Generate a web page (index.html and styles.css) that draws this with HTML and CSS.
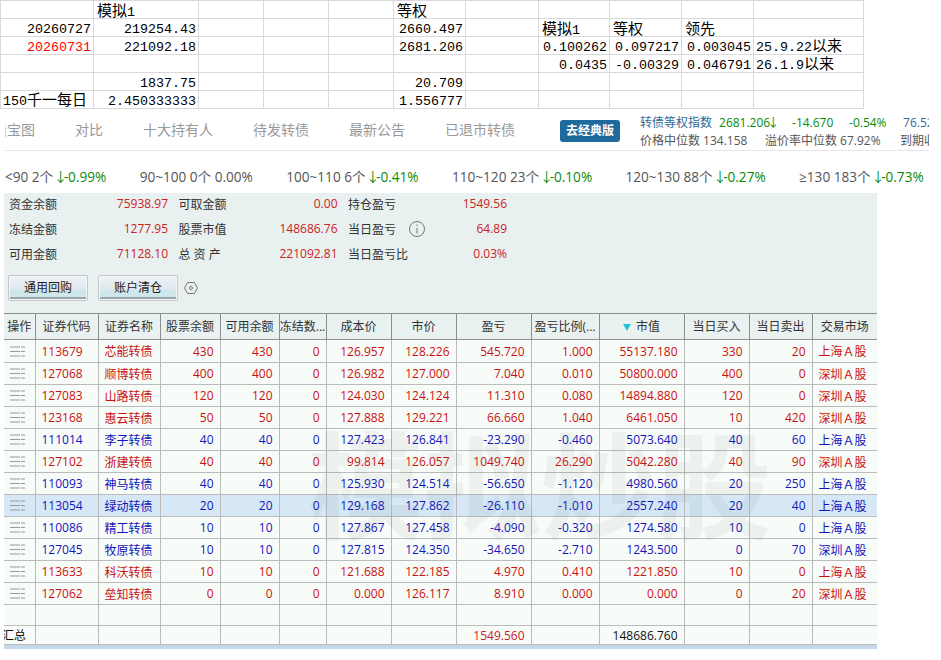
FILE: index.html
```html
<!DOCTYPE html>
<html lang="zh-CN">
<head>
    <meta charset="UTF-8">
    <meta name="viewport" content="width=device-width, initial-scale=1.0">
    <title>模拟炒股</title>
    <link rel="stylesheet" href="styles.css">
</head>
<body>
    <svg class="defs" width="0" height="0">
        <symbol id="row-menu" viewBox="0 0 15 11">
            <path d="M0 1h10M11 1h4M0 5.500h10M11 5.500h4M0 10h10M11 10h4" stroke="#999" fill="none"/>
        </symbol>
    </svg>

    <table class="sheet">
        <colgroup>
            <col class="c93"><col class="c105"><col class="c65"><col class="c65"><col class="c65"><col class="c72"><col class="c73"><col class="c71"><col class="c72"><col class="c72"><col class="c110">
        </colgroup>
        <tr><td></td><td class="cn">模拟<span class="mono">1</span></td><td></td><td></td><td></td><td class="cn">等权</td><td></td><td></td><td></td><td></td><td></td></tr>
        <tr><td>20260727</td><td>219254.43</td><td></td><td></td><td></td><td>2660.497</td><td></td><td class="cn">模拟<span class="mono">1</span></td><td class="cn">等权</td><td class="cn">领先</td><td></td></tr>
        <tr><td class="red">20260731</td><td>221092.18</td><td></td><td></td><td></td><td>2681.206</td><td></td><td>0.100262</td><td>0.097217</td><td>0.003045</td><td class="note">25.9.22<span class="cn-in">以来</span></td></tr>
        <tr><td></td><td></td><td></td><td></td><td></td><td></td><td></td><td>0.0435</td><td>-0.00329</td><td>0.046791</td><td class="note">26.1.9<span class="cn-in">以来</span></td></tr>
        <tr><td></td><td>1837.75</td><td></td><td></td><td></td><td>20.709</td><td></td><td></td><td></td><td></td><td></td></tr>
        <tr><td class="note">150<span class="cn-in">千一每日</span></td><td>2.450333333</td><td></td><td></td><td></td><td>1.556777</td><td></td><td></td><td></td><td></td><td></td></tr>
    </table>

    <div class="topbar">
        <div class="tabs">
            <a class="tab tab-cut">债宝图</a>
            <a class="tab">对比</a>
            <a class="tab">十大持有人</a>
            <a class="tab">待发转债</a>
            <a class="tab">最新公告</a>
            <a class="tab">已退市转债</a>
        </div>
        <a class="classic-btn">去经典版</a>
        <div class="index-info">
            <div class="info-line">
                <span class="idx-name">转债等权指数</span>
                <span class="green w73">2681.206<i class="arr">↓</i></span>
                <span class="green w57">-14.670</span>
                <span class="green w54">-0.54%</span>
                <span class="idx-name">76.52</span>
            </div>
            <div class="info-line">
                <span class="w125">价格中位数 134.158</span>
                <span class="w135">溢价率中位数 67.92%</span>
                <span>到期收益率</span>
            </div>
        </div>
    </div>

    <div class="ranges">
        <span>&lt;90 2个 <b><i class="arr">↓</i>-0.99%</b></span>
        <span>90~100 0个 0.00%</span>
        <span>100~110 6个 <b><i class="arr">↓</i>-0.41%</b></span>
        <span>110~120 23个 <b><i class="arr">↓</i>-0.10%</b></span>
        <span>120~130 88个 <b><i class="arr">↓</i>-0.27%</b></span>
        <span>≥130 183个 <b><i class="arr">↓</i>-0.73%</b></span>
    </div>

    <div class="account">
        <div class="funds">
            <div class="fund"><label>资金余额</label><em>75938.97</em></div>
            <div class="fund"><label>可取金额</label><em>0.00</em></div>
            <div class="fund"><label>持仓盈亏</label><em>1549.56</em></div>
            <div class="fund"><label>冻结金额</label><em>1277.95</em></div>
            <div class="fund"><label>股票市值</label><em>148686.76</em></div>
            <div class="fund">
                <label>当日盈亏</label>
                <svg class="info-icon" width="18" height="18" viewBox="0 0 18 18">
                    <circle cx="9" cy="9" r="7.500" fill="none" stroke="#777"/>
                    <path d="M9 8v5.500M9 4.500v1.500" stroke="#777" fill="none"/>
                </svg>
                <em>64.89</em>
            </div>
            <div class="fund"><label>可用金额</label><em>71128.10</em></div>
            <div class="fund"><label>总 资 产</label><em>221092.81</em></div>
            <div class="fund"><label>当日盈亏比</label><em>0.03%</em></div>
        </div>
        <div class="actions">
            <button class="gray-btn">通用回购</button>
            <button class="gray-btn">账户清仓</button>
            <svg width="14" height="14" viewBox="0 0 14 14">
                <path d="M3.500 1.500h7L13.500 7l-3 5.500h-7L.5 7z" fill="none" stroke="#777"/>
                <circle cx="7" cy="7" r="1.500" fill="none" stroke="#777"/>
            </svg>
        </div>
    </div>

    <div class="holdings">
        <table class="grid">
            <colgroup>
                <col class="h31"><col class="h63"><col class="h62"><col class="h60"><col class="h59"><col class="h47"><col class="h65"><col class="h65"><col class="h75"><col class="h68"><col class="h85"><col class="h65"><col class="h63"><col class="h65">
            </colgroup>
            <thead>
                <tr>
                    <th>操作</th><th>证券代码</th><th>证券名称</th><th>股票余额</th><th>可用余额</th><th>冻结数...</th><th>成本价</th><th>市价</th><th>盈亏</th><th>盈亏比例(...</th><th><i class="sort-mark"></i>市值</th><th>当日买入</th><th>当日卖出</th><th>交易市场</th>
                </tr>
            </thead>
            <tbody>
                <tr class="up first"><td class="op"><svg class="menu"><use href="#row-menu"/></svg></td><td class="txt">113679</td><td class="txt">芯能转债</td><td>430</td><td>430</td><td>0</td><td>126.957</td><td>128.226</td><td>545.720</td><td>1.000</td><td>55137.180</td><td>330</td><td>20</td><td class="txt">上海Ａ股</td></tr>
                <tr class="up"><td class="op"><svg class="menu"><use href="#row-menu"/></svg></td><td class="txt">127068</td><td class="txt">顺博转债</td><td>400</td><td>400</td><td>0</td><td>126.982</td><td>127.000</td><td>7.040</td><td>0.010</td><td>50800.000</td><td>400</td><td>0</td><td class="txt">深圳Ａ股</td></tr>
                <tr class="up"><td class="op"><svg class="menu"><use href="#row-menu"/></svg></td><td class="txt">127083</td><td class="txt">山路转债</td><td>120</td><td>120</td><td>0</td><td>124.030</td><td>124.124</td><td>11.310</td><td>0.080</td><td>14894.880</td><td>120</td><td>0</td><td class="txt">深圳Ａ股</td></tr>
                <tr class="up"><td class="op"><svg class="menu"><use href="#row-menu"/></svg></td><td class="txt">123168</td><td class="txt">惠云转债</td><td>50</td><td>50</td><td>0</td><td>127.888</td><td>129.221</td><td>66.660</td><td>1.040</td><td>6461.050</td><td>10</td><td>420</td><td class="txt">深圳Ａ股</td></tr>
                <tr class="down"><td class="op"><svg class="menu"><use href="#row-menu"/></svg></td><td class="txt">111014</td><td class="txt">李子转债</td><td>40</td><td>40</td><td>0</td><td>127.423</td><td>126.841</td><td>-23.290</td><td>-0.460</td><td>5073.640</td><td>40</td><td>60</td><td class="txt">上海Ａ股</td></tr>
                <tr class="up"><td class="op"><svg class="menu"><use href="#row-menu"/></svg></td><td class="txt">127102</td><td class="txt">浙建转债</td><td>40</td><td>40</td><td>0</td><td>99.814</td><td>126.057</td><td>1049.740</td><td>26.290</td><td>5042.280</td><td>40</td><td>90</td><td class="txt">深圳Ａ股</td></tr>
                <tr class="down"><td class="op"><svg class="menu"><use href="#row-menu"/></svg></td><td class="txt">110093</td><td class="txt">神马转债</td><td>40</td><td>40</td><td>0</td><td>125.930</td><td>124.514</td><td>-56.650</td><td>-1.120</td><td>4980.560</td><td>20</td><td>250</td><td class="txt">上海Ａ股</td></tr>
                <tr class="down sel"><td class="op"><svg class="menu"><use href="#row-menu"/></svg></td><td class="txt">113054</td><td class="txt">绿动转债</td><td>20</td><td>20</td><td>0</td><td>129.168</td><td>127.862</td><td>-26.110</td><td>-1.010</td><td>2557.240</td><td>20</td><td>40</td><td class="txt">上海Ａ股</td></tr>
                <tr class="down"><td class="op"><svg class="menu"><use href="#row-menu"/></svg></td><td class="txt">110086</td><td class="txt">精工转债</td><td>10</td><td>10</td><td>0</td><td>127.867</td><td>127.458</td><td>-4.090</td><td>-0.320</td><td>1274.580</td><td>10</td><td>0</td><td class="txt">上海Ａ股</td></tr>
                <tr class="down"><td class="op"><svg class="menu"><use href="#row-menu"/></svg></td><td class="txt">127045</td><td class="txt">牧原转债</td><td>10</td><td>10</td><td>0</td><td>127.815</td><td>124.350</td><td>-34.650</td><td>-2.710</td><td>1243.500</td><td>0</td><td>70</td><td class="txt">深圳Ａ股</td></tr>
                <tr class="up"><td class="op"><svg class="menu"><use href="#row-menu"/></svg></td><td class="txt">113633</td><td class="txt">科沃转债</td><td>10</td><td>10</td><td>0</td><td>121.688</td><td>122.185</td><td>4.970</td><td>0.410</td><td>1221.850</td><td>10</td><td>0</td><td class="txt">上海Ａ股</td></tr>
                <tr class="up"><td class="op"><svg class="menu"><use href="#row-menu"/></svg></td><td class="txt">127062</td><td class="txt">垒知转债</td><td>0</td><td>0</td><td>0</td><td>0.000</td><td>126.117</td><td>8.910</td><td>0.000</td><td>0.000</td><td>0</td><td>20</td><td class="txt">深圳Ａ股</td></tr>
                <tr class="blank"><td></td><td></td><td></td><td></td><td></td><td></td><td></td><td></td><td></td><td></td><td></td><td></td><td></td><td></td></tr>
                <tr class="total"><td class="sum-label">汇总</td><td></td><td></td><td></td><td></td><td></td><td></td><td></td><td class="red">1549.560</td><td></td><td>148686.760</td><td></td><td></td><td></td></tr>
            </tbody>
        </table>
        <div class="watermark">模拟炒股</div>
        <div class="grid-foot"></div>
    </div>
</body>
</html>
```

FILE: styles.css
```css
body {
    margin: 0;
    background: #fff;
    font-family: "Open Sans", "Noto Sans CJK SC", sans-serif;
    font-size: 12px;
    color: #333;
    overflow: hidden;
}

.defs {
    display: block;
    height: 0;
}

/* excel part on top */
.sheet {
    border-collapse: collapse;
    table-layout: fixed;
    width: 863px;
    font-family: "Liberation Mono", "Noto Sans CJK SC", monospace;
    font-size: 13.33px;
    color: #000;
}

.sheet td {
    height: 17px;
    padding: 0 2px 0 0;
    border: 1px solid #d9d9d9;
    text-align: right;
    vertical-align: bottom;
    white-space: nowrap;
    line-height: 13px;
}

.sheet td.cn {
    height: 15px;
    text-align: left;
    padding: 0 0 2px 3px;
    font-family: "Noto Sans CJK SC", sans-serif;
    font-size: 15px;
}

.sheet .mono {
    font-family: "Liberation Mono", monospace;
    font-size: 13.33px;
    line-height: 0;
}

.sheet .note {
    text-align: left;
    padding-left: 2px;
}

.cn-in {
    font-family: "Noto Sans CJK SC", sans-serif;
    font-size: 15px;
}

.sheet .red { color: #f00; }

.c93 { width: 93px; }
.c105 { width: 105px; }
.c65 { width: 65px; }
.c72 { width: 72px; }
.c73 { width: 73px; }
.c71 { width: 71px; }
.c110 { width: 110px; }

/* tabs and index info */
.topbar {
    display: flex;
    align-items: center;
    width: 924px;
    height: 41px;
    margin-left: 5px;
    border-bottom: 1px solid #e6e6e6;
    overflow: hidden;
}

.tabs {
    display: flex;
    gap: 40px;
    font-size: 14px;
    color: #999;
    flex: none;
    width: 555px;
    margin-top: -2px;
    overflow: hidden;
}

.tab {
    flex: none;
}

.tab-cut {
    margin-left: -12px;
}

.classic-btn {
    flex: none;
    width: 60px;
    height: 22px;
    margin-top: 3px;
    line-height: 22px;
    text-align: center;
    background: #1f6a9c;
    color: #fff;
    font-weight: bold;
    border-radius: 3px;
}

.index-info {
    flex: none;
    margin-left: 20px;
    width: 300px;
    margin-top: 5px;
    white-space: nowrap;
}

.info-line {
    display: flex;
    height: 18px;
    line-height: 18px;
    color: #555;
}

.info-line span {
    flex: none;
}

.idx-name {
    color: #2c6a9c;
    margin-right: 7px;
}

.green { color: #0a8a0a; }
.w73 { width: 73px; }
.w57 { width: 57px; }
.w54 { width: 54px; }
.w125 { width: 125px; }
.w135 { width: 135px; }

.arr {
    display: inline-block;
    width: 7px;
    font-style: normal;
    text-indent: -3px;
    overflow: hidden;
    vertical-align: bottom;
}

/* price ranges */
.ranges {
    display: flex;
    gap: 33.4px;
    height: 42px;
    padding: 7px 0 0 5px;
    box-sizing: border-box;
    align-items: center;
    font-size: 13.6px;
    color: #555;
    white-space: nowrap;
}

.ranges b {
    font-weight: normal;
    color: #0a8a0a;
}

/* account box */
.account {
    width: 873px;
    height: 120px;
    margin-left: 4px;
    background: #e8f0f0;
    overflow: hidden;
}

.funds {
    display: grid;
    grid-template-columns: 159px 159px 159px;
    column-gap: 10.5px;
    grid-auto-rows: 25px;
    margin-top: -2px;
    padding-left: 5px;
    align-items: center;
}

.fund {
    display: flex;
    align-items: center;
}

.fund em {
    margin-left: auto;
    font-style: normal;
    color: #c22;
}

.info-icon {
    margin-left: 12px;
}

.actions {
    display: flex;
    align-items: center;
    gap: 10px;
    padding: 9px 0 0 4px;
}

.actions svg {
    margin: 0 0 0 -4px;
}

.gray-btn {
    width: 80px;
    height: 26px;
    padding: 0 0 3px;
    border: 1px solid #c4c8ca;
    border-radius: 2px;
    box-shadow: inset 0 0 0 1px #f4f6f7;
    background: linear-gradient(to bottom, #eef2f6 0, #dfe8ee 55%, #cfe6ea 60%, #cfe6ea 88%, #9aa7ab 89%, #9aa7ab 100%);
    font-family: "Noto Sans CJK SC", sans-serif;
    font-size: 12px;
    color: #222;
}

/* holdings table */
.holdings {
    position: relative;
    width: 873px;
    margin-left: 4px;
    overflow: hidden;
}

.grid {
    border-collapse: collapse;
    table-layout: fixed;
    width: 873px;
}

.h31 { width: 31px; }
.h63 { width: 63px; }
.h62 { width: 62px; }
.h60 { width: 60px; }
.h59 { width: 59px; }
.h47 { width: 47px; }
.h65 { width: 65px; }
.h75 { width: 75px; }
.h68 { width: 68px; }
.h85 { width: 85px; }

.grid th,
.grid td {
    padding: 0 6px;
    overflow: hidden;
    white-space: nowrap;
    box-sizing: border-box;
}

.grid th {
    height: 26px;
    padding: 0 0 2px;
    background: #e9f1f1;
    font-weight: normal;
    border: 1px solid #8a8f90;
    border-left-width: 0;
}

.grid th:last-child { border-right-width: 0; }

.grid td {
    height: 22px;
    text-align: right;
    background: #f8fcf9;
    border-right: 1px solid #bbb;
    border-bottom: 1px solid #bbb;
}

.grid td:last-child { border-right-width: 0; }

.grid .first td { height: 23px; }
.grid .blank td { height: 21px; }
.grid .total td { height: 18px; color: #111; }
.grid .total .red { color: #c22; }

.grid .txt { text-align: left; }
.grid .op { padding: 0 0 0 6px; text-align: left; }

.up td { color: #cc1010; }
.down td { color: #1414bb; }
.sel td { background: #d6e8f5; }

.menu {
    display: block;
    width: 15px;
    height: 11px;
}

.sum-label {
    text-align: left !important;
    padding: 0 !important;
    text-indent: -2px;
}

.sort-mark {
    display: inline-block;
    width: 0;
    height: 0;
    margin-right: 5px;
    border-left: 4px solid transparent;
    border-right: 4px solid transparent;
    border-top: 7px solid #22c6d6;
}

.watermark {
    position: absolute;
    left: 304px;
    top: 96px;
    font-family: "Noto Sans CJK SC", sans-serif;
    font-weight: bold;
    font-size: 116px;
    line-height: 140px;
    color: rgba(90, 100, 95, 0.07);
    white-space: nowrap;
    pointer-events: none;
}

.grid-foot {
    height: 4px;
    background: #c5d8ec;
}
```
